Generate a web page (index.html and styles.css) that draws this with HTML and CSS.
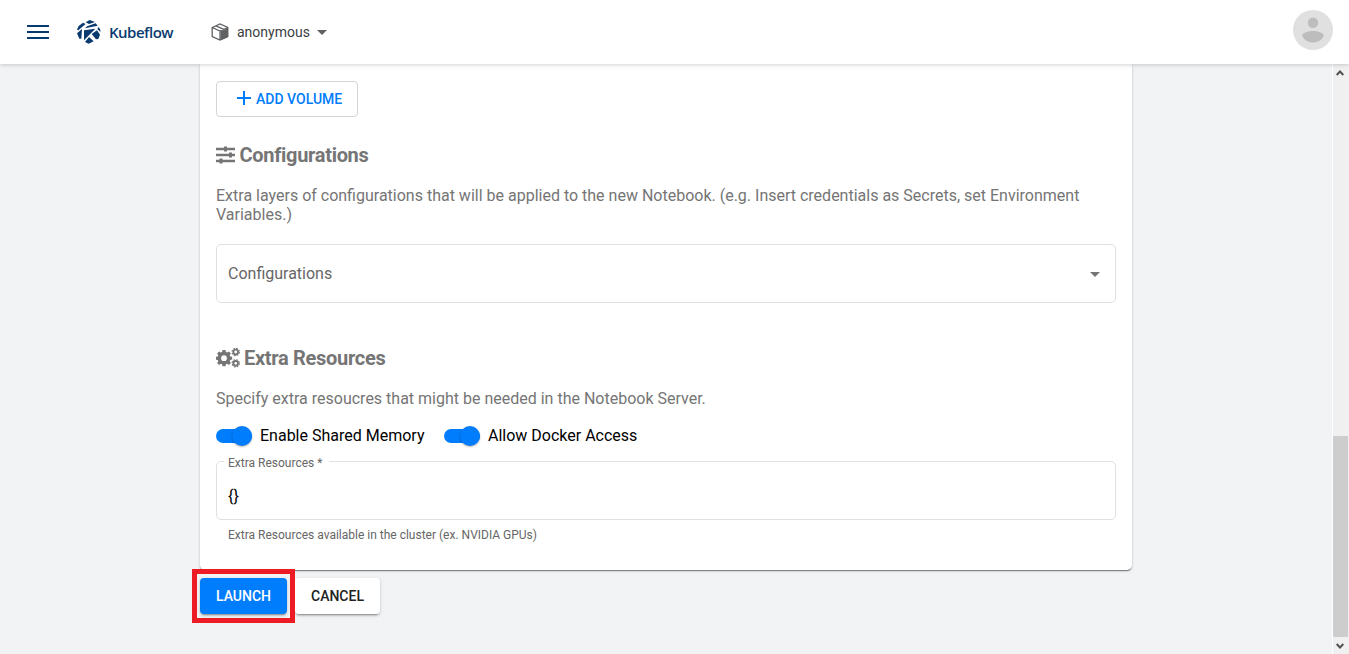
FILE: index.html
```html
<!DOCTYPE html>
<html lang="en">
<head>
<meta charset="utf-8">
<title>Kubeflow</title>
<link rel="stylesheet" href="styles.css">
</head>
<body>
<header class="toolbar">
  <svg class="menu" viewBox="0 0 22 14"><path d="M0 0h22v2H0zM0 6h22v2H0zM0 12h22v2H0z"/></svg>
  <svg class="logo" viewBox="0 0 72 72"><path d="M26 7 38 0 54 6 36 12zM5 18 18 8 26 12 4 31 0 29zM30 19 56 10 62 17 24 25zM0 40 15 27 13 56 7 56zM21 31 55 26 21 61zM65 21 70 29 70 36 61 27zM44 42 60 31 69 44 64 57 57 58zM36 51 50 64 35 71 24 66z"/></svg>
  <span class="brand">Kubeflow</span>
  <svg class="cube" viewBox="0 0 18 18"><path d="M1.2 4.5 9 1l7.800 3.500v9L9 17l-7.800-3.500zM1.200 4.500 9 8l7.800-3.500M9 8v9M5 2.800l7.800 3.500" fill="none" stroke="#5f6163" stroke-width="1.300"/><path d="M9.500 8.300 17 5v9l-7.500 3.300z" fill="#5f6163"/></svg>
  <span class="namespace">anonymous</span>
  <span class="caret"></span>
  <svg class="avatar" viewBox="0 0 40 40"><circle cx="20" cy="20" r="20" fill="#e0e0e0"/><circle cx="20" cy="12.700" r="5.200" fill="#bdbdbd"/><path d="M9 25.500C10.500 22.500 15 21 20 21s9.500 1.500 11 4.500c-2 4.500-6.500 7-11 7s-9-2.500-11-7z" fill="#bdbdbd"/></svg>
</header>
<div class="viewport">
  <main class="content">
    <section class="card">
      <button class="add"><svg viewBox="0 0 14 14"><path d="M6 0h2v6h6v2H8v6H6V8H0V6h6z"/></svg><span>ADD VOLUME</span></button>
      <h3 class="heading heading-config"><svg class="sliders" viewBox="0 0 19 18"><path d="M0 1.800h19v2.400H0zM0 7.800h19v2.400H0zM0 13.800h19v2.400H0zM8 .5h3v5H8zM13 6.500h3v5h-3zM3.500 12.500h3v5h-3z"/></svg>Configurations</h3>
      <p class="text">Extra layers of configurations that will be applied to the new Notebook. (e.g. Insert credentials as Secrets, set Environment Variables.)</p>
      <div class="select"><span>Configurations</span><i class="caret"></i></div>
      <h3 class="heading heading-extra"><svg class="gears" viewBox="0 0 24 20"><path fill-rule="evenodd" d="M6.500 2h3l.4 2.100 1.200.5 1.800-1.200 2 2-1.200 1.800.5 1.200 2 .3v2.900l-2 .4-.5 1.200 1.200 1.800-2 2-1.800-1.200-1.200.5-.4 2h-3l-.4-2-1.200-.5-1.800 1.200-2-2 1.200-1.800-.5-1.200-2-.4V8.700l2-.3.5-1.200-1.200-1.800 2-2 1.800 1.200 1.200-.5zM8 7.300a2.900 2.900 0 1 0 0 5.800 2.900 2.900 0 0 0 0-5.800z"/><g fill="none" stroke="#757575"><circle cx="19.700" cy="4" r="2.300" stroke-width="1.800"/><circle cx="19.700" cy="15.300" r="2.300" stroke-width="1.800"/><circle cx="19.700" cy="4" r="3.600" stroke-width="1.200" stroke-dasharray="1.700 1.130"/><circle cx="19.700" cy="15.300" r="3.600" stroke-width="1.200" stroke-dasharray="1.700 1.130"/></g></svg>Extra Resources</h3>
      <p class="text">Specify extra resoucres that might be needed in the Notebook Server.</p>
      <div class="toggles">
        <label class="toggle"><i class="switch"><b></b></i><span>Enable Shared Memory</span></label>
        <label class="toggle"><i class="switch"><b></b></i><span>Allow Docker Access</span></label>
      </div>
      <fieldset class="field"><legend>Extra Resources *</legend><span>{}</span></fieldset>
      <div class="hint">Extra Resources available in the cluster (ex. NVIDIA GPUs)</div>
    </section>
    <div class="actions">
      <span class="highlight"><button class="btn launch">LAUNCH</button></span>
      <button class="btn cancel">CANCEL</button>
    </div>
  </main>
  <aside class="scrollbar">
    <svg class="arrow" viewBox="0 0 8 6"><path d="M.7 5 4 1.500 7.300 5"/></svg>
    <div class="thumb"></div>
    <svg class="arrow" viewBox="0 0 8 6"><path d="M.7 1 4 4.500 7.300 1"/></svg>
  </aside>
</div>
</body>
</html>
```
FILE: styles.css
```css
* { box-sizing: border-box; }
body { margin: 0; height: 654px; overflow: hidden; background: #f1f3f5; font-family: Roboto, sans-serif; display: flex; flex-direction: column; }
button { font: 500 14px Roboto, sans-serif; }
svg { display: block; flex: none; }
.toolbar { position: relative; z-index: 2; flex: none; height: 64px; padding: 0 16px 0 27px; display: flex; align-items: center; background: #fff; box-shadow: 0 0 5px rgba(0,0,0,.25); }
.menu { width: 22px; height: 14px; fill: #083a70; }
.logo { width: 24px; height: 24px; margin-left: 28px; fill: #083a70; }
.brand { width: 64px; margin-left: 8px; font: 600 15px/20px "Open Sans", sans-serif; letter-spacing: -.5px; color: #083a70; white-space: nowrap; }
.cube { width: 18px; height: 18px; margin-left: 38px; }
.namespace { margin-left: 8px; font-size: 14px; color: #3c4043; width: 73px; }
.caret { flex: none; width: 0; height: 0; border: 5px solid transparent; border-top-color: #757575; border-bottom: 0; }
.toolbar .caret { margin-left: 7px; margin-top: 1px; border-top-color: #5f6163; }
.avatar { width: 40px; height: 40px; margin: 0 0 4px auto; }
.viewport { flex: 1; display: flex; }
.content { width: 1332px; padding: 0 200px; }
.card { width: 932px; height: 506px; padding: 17px 16px 0; background: #fff; border-radius: 0 0 5px 5px; box-shadow: 0 2px 1px -1px rgba(0,0,0,.3), 0 1px 1px rgba(0,0,0,.18), 0 1px 3px rgba(0,0,0,.18); }
.add { display: flex; align-items: center; width: 142px; height: 36px; padding: 0 0 0 20px; background: #fff; border: 1px solid #d5d5d5; border-radius: 4px; color: #007dfc; white-space: nowrap; }
.add svg { width: 14px; height: 14px; margin: 0 5px 2px 0; fill: #007dfc; }
.heading { display: flex; align-items: center; height: 24px; margin: 0; font-size: 20px; font-weight: 700; letter-spacing: -.3px; color: #757575; fill: #757575; }
.heading-config { margin-top: 26px; }
.heading-extra { margin-top: 43px; }
.sliders { width: 19px; height: 18px; margin-right: 4.5px; }
.gears { width: 24px; height: 20px; margin: 0 4px 1px 0; }
.text { margin: 19px 0 0; font-size: 16px; line-height: 19px; color: #757575; }
.select { display: flex; align-items: center; justify-content: space-between; height: 59px; margin-top: 20px; padding: 0 15px 0 11px; border: 1px solid #e0e0e0; border-radius: 5px; font-size: 16px; color: #666; }
.select .caret { margin-top: 2px; }
.toggles { display: flex; gap: 19.5px; height: 24px; margin-top: 16px; }
.toggle { display: flex; align-items: center; font-size: 16px; color: #000; }
.toggle span { padding-bottom: 2px; }
.switch { display: flex; justify-content: flex-end; align-items: center; width: 36px; height: 14px; margin-right: 8px; border-radius: 7px; background: #007dfc; }
.switch b { width: 20px; height: 20px; border-radius: 50%; background: #007dfc; box-shadow: 0 1px 2px rgba(0,0,0,.3); }
.field { height: 64px; margin: 8px 0 0; padding: 0 11px; border: 1px solid #e0e0e0; border-radius: 5px; min-width: 0; }
.field legend { height: 10px; margin-left: -4px; padding: 0 7px 0 4px; font-size: 12px; line-height: 14px; color: #666; }
.field span { display: block; margin-top: 21px; font-size: 16px; line-height: 19px; }
.hint { margin: 8px 0 0 12px; font-size: 12px; line-height: 14px; color: #666; }
.actions { display: flex; margin: -1px 0 0 -8px; }
.highlight { position: relative; z-index: 1; width: 103px; height: 54px; border: 5px solid #ed1c24; padding: 4px 3px; }
.btn { display: block; height: 36px; padding: 0; border: 0; border-radius: 4px; text-align: center; box-shadow: 0 3px 1px -2px rgba(0,0,0,.2), 0 2px 2px rgba(0,0,0,.14), 0 1px 4px rgba(0,0,0,.12); }
.launch { width: 87px; color: #fff; background: #007dfc; }
.cancel { width: 85px; margin-top: 9px; color: #212121; background: #fff; }
.scrollbar { width: 17px; display: flex; flex-direction: column; align-items: flex-start; background: #f0f0f0; border-left: 1px solid #fff; padding-top: 6px; }
.arrow { width: 8px; height: 6px; margin-left: 3px; fill: none; stroke: #505050; stroke-width: 1.900; }
.thumb { width: 15px; height: 201px; margin: 360px 0 6px; background: #cdcdcd; }
```
